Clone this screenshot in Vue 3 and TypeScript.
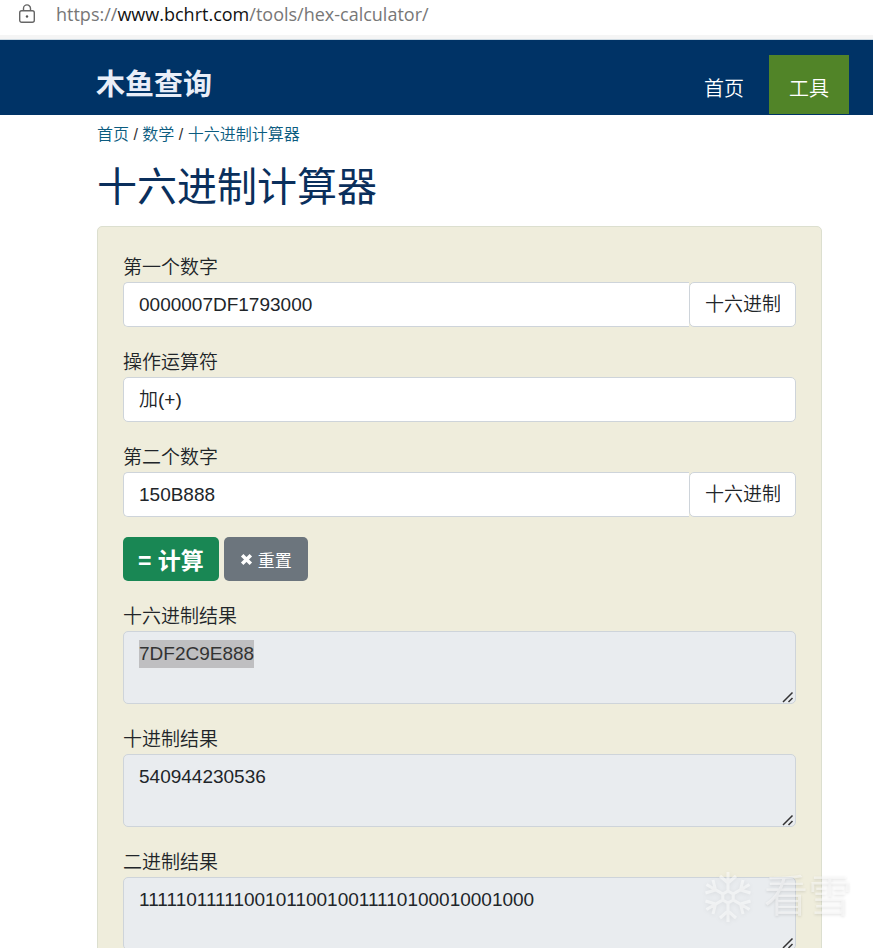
<script setup lang="ts">
import { onMounted, ref } from 'vue'

type Operator = 'add' | 'sub' | 'mul' | 'div'

const first = ref('0000007DF1793000')
const second = ref('150B888')
const operator = ref<Operator>('add')
const firstBase = ref(16)
const secondBase = ref(16)
const hexResult = ref('')
const decResult = ref('')
const binResult = ref('')

function parse(text: string, base: number): bigint {
  return BigInt(base === 16 ? `0x${text.trim()}` : text.trim())
}

function calculate(): void {
  try {
    const a = parse(first.value, firstBase.value)
    const b = parse(second.value, secondBase.value)
    const operations: Record<Operator, () => bigint> = {
      add: () => a + b,
      sub: () => a - b,
      mul: () => a * b,
      div: () => a / b,
    }
    const result = operations[operator.value]()
    hexResult.value = result.toString(16).toUpperCase()
    decResult.value = result.toString(10)
    binResult.value = result.toString(2)
  } catch {
    hexResult.value = decResult.value = binResult.value = ''
  }
}

function reset(): void {
  first.value = second.value = ''
  hexResult.value = decResult.value = binResult.value = ''
}

const outputs = [
  { id: 'hex', label: '十六进制结果', value: hexResult },
  { id: 'dec', label: '十进制结果', value: decResult },
  { id: 'bin', label: '二进制结果', value: binResult },
]

calculate()

onMounted(() => {
  const output = document.querySelector<HTMLTextAreaElement>('#hex')
  output?.focus({ preventScroll: true })
  output?.select()
})
</script>

<template>
  <div class="page">
    <div class="address-bar">
      <svg class="lock" viewBox="0 0 18 20" aria-hidden="true">
        <rect x="1.7" y="6.7" width="14.6" height="11.6" rx="2" />
        <path d="M5.500 6.700V4.400a3.500 3.500 0 0 1 7 0v2.300" />
        <circle cx="9" cy="12.5" r="1.2" />
      </svg>
      <span class="url">https://<b>www.bchrt.com</b>/tools/hex-calculator/</span>
    </div>

    <header class="site-header">
      <a class="brand" href="#">木鱼查询</a>
      <nav class="nav">
        <a href="#">首页</a>
        <a class="active" href="#">工具</a>
      </nav>
    </header>

    <main class="content">
      <nav class="breadcrumb">
        <a href="#">首页</a> / <a href="#">数学</a> / <a href="#">十六进制计算器</a>
      </nav>
      <h1>十六进制计算器</h1>

      <form class="panel" @submit.prevent="calculate" @reset.prevent="reset">
        <div class="fields">
          <div class="field">
            <label for="first">第一个数字</label>
            <div class="group">
              <input id="first" v-model="first" class="control" type="text" />
              <select v-model="firstBase" class="control base" aria-labelledby="first">
                <option :value="16">十六进制</option>
                <option :value="10">十进制</option>
              </select>
            </div>
          </div>
          <div class="field">
            <label for="operator">操作运算符</label>
            <select id="operator" v-model="operator" class="control">
              <option value="add">加(+)</option>
              <option value="sub">减(-)</option>
              <option value="mul">乘(×)</option>
              <option value="div">除(÷)</option>
            </select>
          </div>
          <div class="field">
            <label for="second">第二个数字</label>
            <div class="group">
              <input id="second" v-model="second" class="control" type="text" />
              <select v-model="secondBase" class="control base" aria-labelledby="second">
                <option :value="16">十六进制</option>
                <option :value="10">十进制</option>
              </select>
            </div>
          </div>
        </div>

        <div class="actions">
          <button class="btn calc" type="submit">= 计算</button>
          <button class="btn reset" type="reset">
            <svg class="cross" viewBox="0 0 12 12" aria-hidden="true"><path d="M2 2l8 8M10 2l-8 8" /></svg>
            重置
          </button>
        </div>

        <div class="fields">
          <div v-for="output in outputs" :key="output.id" class="field">
            <label :for="output.id">{{ output.label }}</label>
            <div class="output-box">
              <textarea :id="output.id" class="control output" readonly :value="output.value.value"></textarea>
              <svg class="grip" viewBox="0 0 12 12" aria-hidden="true"><path d="M1 11L10.500 1.500M6.500 11l4-4" /></svg>
            </div>
          </div>
        </div>
      </form>
    </main>

    <div class="watermark">
      <svg viewBox="0 0 52 56" aria-hidden="true">
        <path d="M26 22V3M26 34V53M20.800 25L4.500 15.500M31.200 31L47.500 40.500M20.800 31L4.500 40.500M31.200 25L47.500 15.500M26 22l5.200 3v6L26 34l-5.200-3v-6zM18 7l8 7 8-7M18 49l8-7 8 7M3.500 24l10-3-2.500-10M48.500 24l-10-3 2.500-10M3.500 32l10 3-2.500 10M48.500 32l-10 3 2.500 10" />
      </svg>
      <span>看雪</span>
    </div>
  </div>
</template>

<style>
body {
  margin: 0;
  background: #fff;
}
</style>

<style scoped>
.page {
  font-family: "Liberation Sans", "Noto Sans CJK SC", sans-serif;
  font-size: 19px;
  font-weight: 350;
  line-height: 28px;
  color: #212529;
}

.page *,
.page {
  box-sizing: border-box;
}

a {
  text-decoration: none;
}

.address-bar {
  display: flex;
  align-items: center;
  gap: 20px;
  height: 40px;
  padding: 0 18px 11px;
  border-bottom: 1px solid #cfdbe3;
  background: linear-gradient(#fff 35px, #f5f5f5 35px);
}

.lock {
  width: 18px;
  height: 20px;
  fill: none;
  stroke: #666;
  stroke-width: 1.4;
}

.lock circle {
  fill: #555;
  stroke: none;
}

.url {
  font-family: "Open Sans", sans-serif;
  font-size: 18px;
  font-weight: 400;
  color: #777;
  white-space: nowrap;
}

.url b {
  font-weight: 400;
  color: #111;
}

.site-header {
  display: flex;
  align-items: flex-end;
  justify-content: space-between;
  height: 75px;
  padding: 0 24px 1px 96px;
  background: #003366;
}

.brand {
  padding-bottom: 8px;
  font-size: 29px;
  font-weight: 700;
  line-height: 42px;
  color: #e9eef8;
}

.nav {
  display: flex;
  gap: 5px;
}

.nav a {
  padding: 20px 20px 11px;
  font-size: 20px;
  color: #fff;
}

.nav .active {
  background: #518428;
}

.content {
  padding: 6px 51px 24px 97px;
}

.breadcrumb {
  font-size: 16px;
  color: #333;
}

.breadcrumb a {
  color: #0b5c80;
}

h1 {
  margin: 11px 0 12px;
  font-size: 40px;
  font-weight: 400;
  line-height: 54px;
  color: #0a2f5c;
}

.panel {
  padding: 27px 25px 25px;
  border: 1px solid #dcdfcf;
  border-radius: 5px;
  background: #efeddc;
}

.fields {
  display: flex;
  flex-direction: column;
  gap: 22px;
}

.field {
  display: flex;
  flex-direction: column;
}

.group {
  display: flex;
}

.control {
  display: block;
  width: 100%;
  height: 45px;
  margin: 0;
  padding: 0 15px;
  border: 1px solid #ced4da;
  border-radius: 5px;
  outline: none;
  appearance: none;
  background: #fff;
  font: inherit;
  color: #212529;
}

.group input {
  flex: 1;
  min-width: 0;
  border-right: 0;
  border-radius: 5px 0 0 5px;
}

.group .base {
  flex: none;
  width: 107px;
}

.output-box {
  position: relative;
}

.output {
  height: 73px;
  padding: 8px 15px;
  background: #e9ecef;
  resize: vertical;
}

.output::-webkit-resizer {
  background: transparent;
}

.output::selection {
  background: #bfbfc1;
  color: #333;
}

.grip {
  position: absolute;
  right: 2px;
  bottom: 1px;
  width: 12px;
  height: 12px;
  fill: none;
  stroke: #333;
  stroke-width: 1.5;
  pointer-events: none;
}

.actions {
  display: flex;
  gap: 5px;
  margin: 20px 0 22px;
}

.btn {
  display: flex;
  align-items: center;
  justify-content: center;
  height: 44px;
  padding: 0 15px;
  border: 0;
  border-radius: 5px;
  font-family: inherit;
  color: #fff;
  white-space: nowrap;
}

.calc {
  background: #198754;
  font-size: 23px;
  font-weight: 700;
}

.reset {
  gap: 5px;
  padding: 0 16px;
  background: #6c757d;
  font-size: 17px;
}

.cross {
  width: 13px;
  height: 13px;
  fill: none;
  stroke: #fff;
  stroke-width: 3.2;
}

.watermark {
  position: fixed;
  right: 21px;
  bottom: 22px;
  display: flex;
  align-items: center;
  gap: 10px;
  font-size: 44px;
  line-height: 58px;
  color: rgba(255, 255, 255, 0.5);
  text-shadow: 0 1px 3px rgba(0, 0, 0, 0.12);
  pointer-events: none;
}

.watermark svg {
  width: 52px;
  height: 56px;
  fill: none;
  stroke: rgba(255, 255, 255, 0.5);
  stroke-width: 3;
  filter: drop-shadow(0 1px 2px rgba(0, 0, 0, 0.12));
}
</style>
